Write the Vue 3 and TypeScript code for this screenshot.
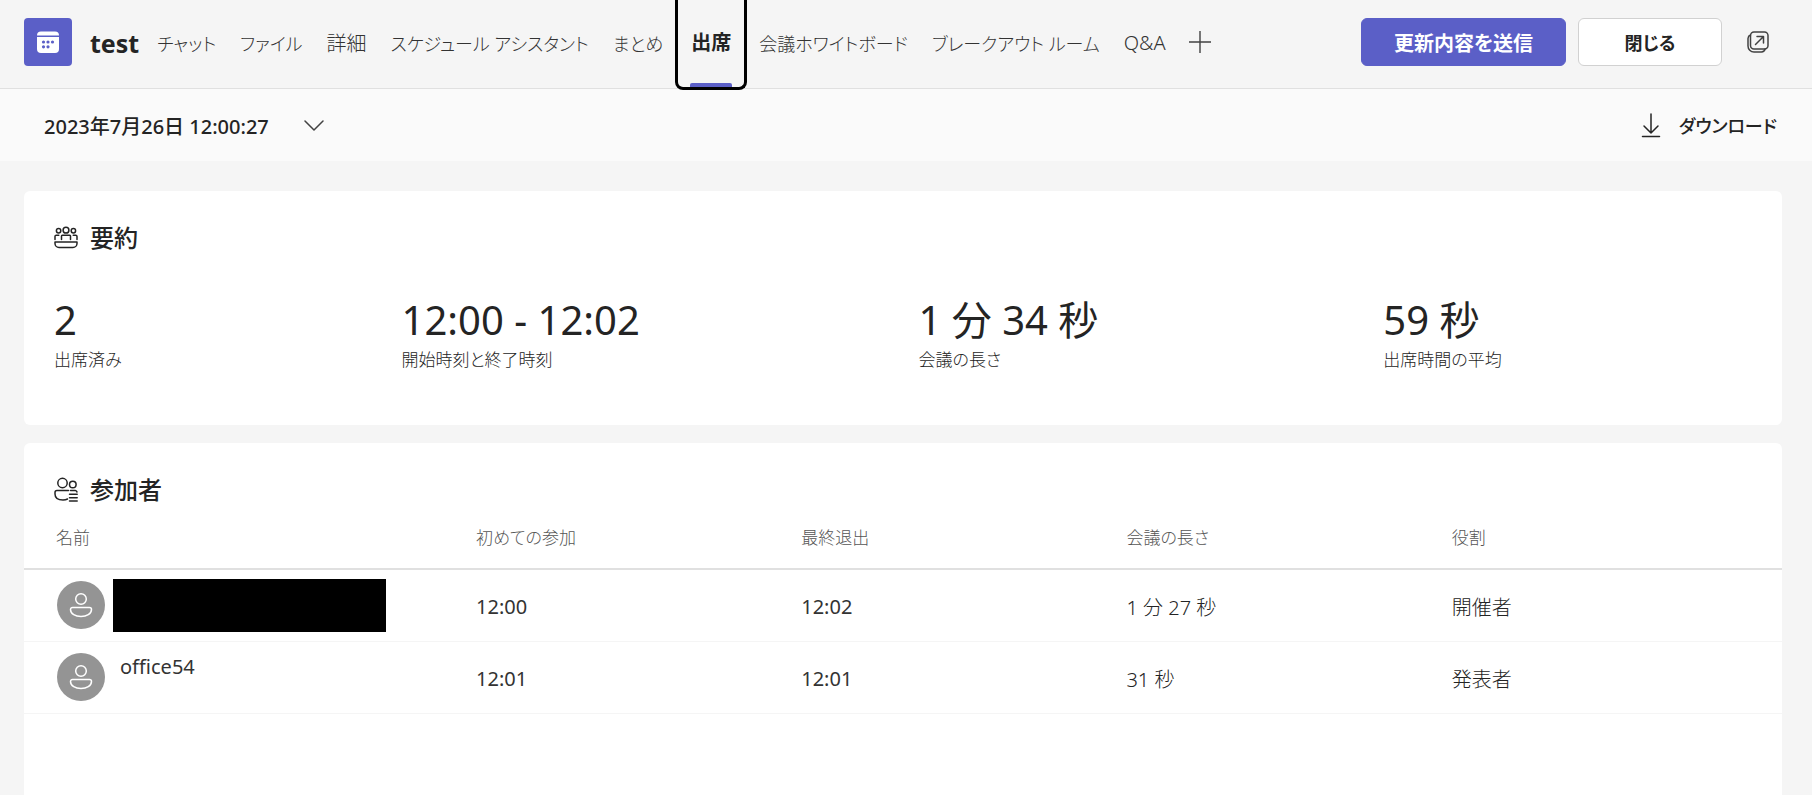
<script setup lang="ts">
interface Tab { label: string; active?: boolean; kana?: boolean }
interface Stat { value: string; label: string }
interface Participant { name: string; redacted: boolean; firstJoin: string; lastLeave: string; duration: string; role: string }

const tabs: Tab[] = [
  { label: 'チャット', kana: true },
  { label: 'ファイル', kana: true },
  { label: '詳細' },
  { label: 'スケジュール アシスタント', kana: true },
  { label: 'まとめ', kana: true },
  { label: '出席', active: true },
  { label: '会議ホワイトボード', kana: true },
  { label: 'ブレークアウト ルーム', kana: true },
  { label: 'Q&A' },
]
const stats: Stat[] = [
  { value: '2', label: '出席済み' },
  { value: '12:00 - 12:02', label: '開始時刻と終了時刻' },
  { value: '1 分 34 秒', label: '会議の長さ' },
  { value: '59 秒', label: '出席時間の平均' },
]
const columns: string[] = ['名前', '初めての参加', '最終退出', '会議の長さ', '役割']
const participants: Participant[] = [
  { name: '', redacted: true, firstJoin: '12:00', lastLeave: '12:02', duration: '1 分 27 秒', role: '開催者' },
  { name: 'office54', redacted: false, firstJoin: '12:01', lastLeave: '12:01', duration: '31 秒', role: '発表者' },
]
</script>

<template>
  <div class="page">
    <header class="topbar">
      <div class="logo">
        <svg width="24" height="24" viewBox="0 0 24 24" aria-hidden="true">
          <path d="M1 5.500a4 4 0 0 1 4-4h14a4 4 0 0 1 4 4z" fill="#fff" />
          <path d="M1 7h22v12a4 4 0 0 1-4 4H5a4 4 0 0 1-4-4z" fill="#fff" />
          <g fill="#5b5fc7">
            <circle cx="7.500" cy="12" r="1.600" /><circle cx="12" cy="12" r="1.600" /><circle cx="16.500" cy="12" r="1.600" />
            <circle cx="7.500" cy="16.800" r="1.600" /><circle cx="12" cy="16.800" r="1.600" />
          </g>
        </svg>
      </div>
      <h1 class="title">test</h1>
      <nav class="tabs">
        <button v-for="t in tabs" :key="t.label" type="button" class="tab" :class="{ active: t.active, kana: t.kana }">{{ t.label }}</button>
        <button type="button" class="add" aria-label="タブを追加">
          <svg width="24" height="24" viewBox="0 0 24 24" aria-hidden="true"><path d="M12 1v22M1 12h22" stroke="#424242" stroke-width="1.400" /></svg>
        </button>
      </nav>
      <div class="actions">
        <button type="button" class="btn primary">更新内容を送信</button>
        <button type="button" class="btn close">閉じる</button>
        <button type="button" class="popout" aria-label="ポップアウト">
          <svg width="24" height="24" viewBox="0 0 24 24" fill="none" stroke="#424242" stroke-width="1.500" stroke-linecap="round" stroke-linejoin="round" aria-hidden="true">
            <rect x="4.500" y="2" width="17.500" height="17" rx="3.500" />
            <path d="M4.500 5A4 4 0 0 0 2 8.500V16a6 6 0 0 0 6 6h7.500a4 4 0 0 0 3.600-3M9.500 14.500l8-8M11 6.500h6.500V13" />
          </svg>
        </button>
      </div>
    </header>

    <div class="toolbar">
      <button type="button" class="date">
        2023年7月26日 12:00:27
        <svg width="20" height="14" viewBox="0 0 20 14" fill="none" stroke="#424242" stroke-width="1.500" stroke-linecap="round" stroke-linejoin="round" aria-hidden="true"><path d="M1 3l9 9 9-9" /></svg>
      </button>
      <button type="button" class="download">
        <svg width="20" height="26" viewBox="0 0 20 26" fill="none" stroke="#242424" stroke-width="1.500" stroke-linecap="round" stroke-linejoin="round" aria-hidden="true"><path d="M10 2v19M3 14l7 7 7-7M1.500 24.500h17" /></svg>
        ダウンロード
      </button>
    </div>

    <main class="content">
      <section class="card summary">
        <h2 class="heading">
          <svg width="24" height="24" viewBox="0 0 24 24" fill="none" stroke="#242424" stroke-width="1.500" stroke-linecap="round" stroke-linejoin="round" aria-hidden="true">
            <circle cx="12" cy="4.200" r="2.900" /><circle cx="4.600" cy="4.800" r="2.200" /><circle cx="19.400" cy="4.800" r="2.200" />
            <path d="M7.500 13.500v-3.500a.8.8 0 0 1 .8-.8h7.400a.8.8 0 0 1 .8.800v3.500M1 13.500v-3a1.300 1.300 0 0 1 1.300-1.300h2.500M23 13.500v-3a1.300 1.300 0 0 0-1.300-1.300h-2.500M1 16h22v1.500a4 4 0 0 1-4 4H5a4 4 0 0 1-4-4z" />
          </svg>
          要約
        </h2>
        <dl class="stats">
          <div v-for="s in stats" :key="s.label" class="stat">
            <dd>{{ s.value }}</dd>
            <dt>{{ s.label }}</dt>
          </div>
        </dl>
      </section>

      <section class="card people">
        <h2 class="heading">
          <svg width="24" height="26" viewBox="0 0 24 26" fill="none" stroke="#242424" stroke-width="1.500" stroke-linecap="round" stroke-linejoin="round" aria-hidden="true">
            <circle cx="8.500" cy="6" r="4.700" /><circle cx="18.800" cy="7.500" r="3.300" />
            <path d="M14.500 13.500H3a2 2 0 0 0-2 2V17c0 4 3.500 6 8 6 1.800 0 3.300-.3 4.500-1M16.500 13.500h4.800a2 2 0 0 1 1.700 1.500M15.500 17.300h7.700M15.500 20.700h7.700M15.500 24h7.700" />
          </svg>
          参加者
        </h2>
        <table class="table">
          <thead>
            <tr><th v-for="c in columns" :key="c" scope="col">{{ c }}</th></tr>
          </thead>
          <tbody>
            <tr v-for="p in participants" :key="p.role">
              <td>
                <div class="person">
                  <span class="avatar">
                    <svg width="24" height="26" viewBox="0 0 24 26" fill="none" stroke="#fff" stroke-width="1.500" stroke-linejoin="round" aria-hidden="true">
                      <circle cx="12" cy="7" r="5.300" />
                      <path d="M3.500 15.500h17a2 2 0 0 1 2 2c0 4.500-5 7-10.500 7s-10.500-2.500-10.500-7a2 2 0 0 1 2-2z" />
                    </svg>
                  </span>
                  <span v-if="p.redacted" class="redacted"></span>
                  <span v-else class="name">{{ p.name }}</span>
                </div>
              </td>
              <td class="time">{{ p.firstJoin }}</td>
              <td class="time">{{ p.lastLeave }}</td>
              <td>{{ p.duration }}</td>
              <td>{{ p.role }}</td>
            </tr>
          </tbody>
        </table>
      </section>
    </main>
  </div>
</template>

<style>
body {
  margin: 0;
  background: #f5f5f5;
}
</style>

<style scoped>
.page {
  display: flex;
  flex-direction: column;
  height: 100vh;
  overflow: hidden;
  background: #f5f5f5;
  color: #242424;
  font-family: "Noto Sans", "Noto Sans CJK JP", sans-serif;
  font-size: 20px;
  font-feature-settings: "palt";
}
.page * {
  box-sizing: border-box;
}
button {
  margin: 0;
  padding: 0;
  border: 0;
  background: none;
  color: inherit;
  font: inherit;
  font-feature-settings: inherit;
  white-space: nowrap;
}
svg {
  display: block;
  flex: none;
}
.topbar {
  display: flex;
  flex: none;
  height: 89px;
  padding: 0 42px 0 24px;
  border-bottom: 1px solid #e0e0e0;
}
.logo {
  display: grid;
  flex: none;
  place-items: center;
  width: 48px;
  height: 48px;
  margin-top: 18px;
  border-radius: 4px;
  background: #5b5fc7;
}
.title {
  margin: 0 6px 0 18px;
  font-size: 25px;
  font-weight: 700;
  line-height: 86px;
}
.tabs {
  display: flex;
  flex: 1;
}
.tab {
  position: relative;
  padding: 0 12px 3px;
  color: #333;
  font-weight: 300;
}
.tab.kana {
  font-size: 18px;
}
.tab.active {
  height: 90px;
  padding: 0 13px 4px;
  border: 3px solid #000;
  border-top: 0;
  border-radius: 0 0 8px 8px;
  color: #242424;
  font-weight: 600;
}
.tab.active::after {
  position: absolute;
  right: 12px;
  bottom: 0;
  left: 12px;
  height: 4px;
  border-radius: 2px 2px 0 0;
  background: #5b5fc7;
  content: "";
}
.add {
  margin-left: 10px;
  padding-bottom: 4px;
}
.actions {
  display: flex;
  gap: 12px;
  height: 48px;
  margin-top: 18px;
}
.btn {
  width: 144px;
  border: 1px solid #d1d1d1;
  border-radius: 6px;
  background: #fff;
  font-weight: 600;
}
.close {
  font-size: 18px;
}
.primary {
  width: 205px;
  border-color: #5b5fc7;
  background: #5b5fc7;
  color: #fff;
}
.popout {
  margin-left: 12px;
}
.toolbar {
  display: flex;
  flex: none;
  align-items: center;
  justify-content: space-between;
  height: 72px;
  padding: 0 35px 0 44px;
  background: #fafafa;
  font-weight: 500;
}
.date,
.download {
  display: flex;
  gap: 35px;
  align-items: center;
}
.download {
  gap: 18px;
  font-size: 18px;
}
.content {
  display: flex;
  flex: 1;
  flex-direction: column;
  gap: 18px;
  padding: 30px 30px 0 24px;
}
.card {
  border-radius: 6px;
  background: #fff;
}
.summary {
  padding: 30px 30px 52px;
}
.heading {
  display: flex;
  gap: 12px;
  align-items: center;
  margin: 0;
  font-size: 24px;
  font-weight: 500;
  line-height: 34px;
}
.stats {
  display: grid;
  grid-template-columns: 347fr 516fr 464fr 368fr;
  margin: 38px 0 0;
}
.stat {
  display: flex;
  flex-direction: column;
}
.stat dd {
  margin: 0;
  font-size: 40px;
  font-weight: 400;
  line-height: 54px;
}
.stat dt {
  font-size: 17px;
  font-weight: 300;
  line-height: 26px;
}
.people {
  flex: 1;
  border-radius: 6px 6px 0 0;
}
.people .heading {
  padding: 30px 30px 0;
}
.table {
  width: 100%;
  border-collapse: collapse;
  table-layout: fixed;
}
th {
  width: 18.5%;
  height: 62px;
  padding: 0 0 2px;
  border-bottom: 2px solid #e0e0e0;
  color: #555;
  font-size: 17px;
  font-weight: 300;
  text-align: left;
}
th:first-child {
  width: 452px;
  padding-left: 32px;
}
th:last-child {
  width: auto;
}
td {
  height: 72px;
  padding: 2px 0 0;
  border-bottom: 1px solid #f5f5f5;
  font-weight: 300;
}
td.time {
  color: #333;
  font-weight: 400;
}
td:first-child {
  padding: 0 0 0 33px;
}
.person {
  display: flex;
  gap: 8px;
  align-items: center;
}
.avatar {
  display: grid;
  flex: none;
  place-items: center;
  width: 48px;
  height: 48px;
  border-radius: 50%;
  background: #949494;
}
.redacted {
  width: 273px;
  height: 53px;
  background: #000;
}
.name {
  align-self: flex-start;
  padding-left: 7px;
  color: #333;
  font-weight: 400;
}
</style>
